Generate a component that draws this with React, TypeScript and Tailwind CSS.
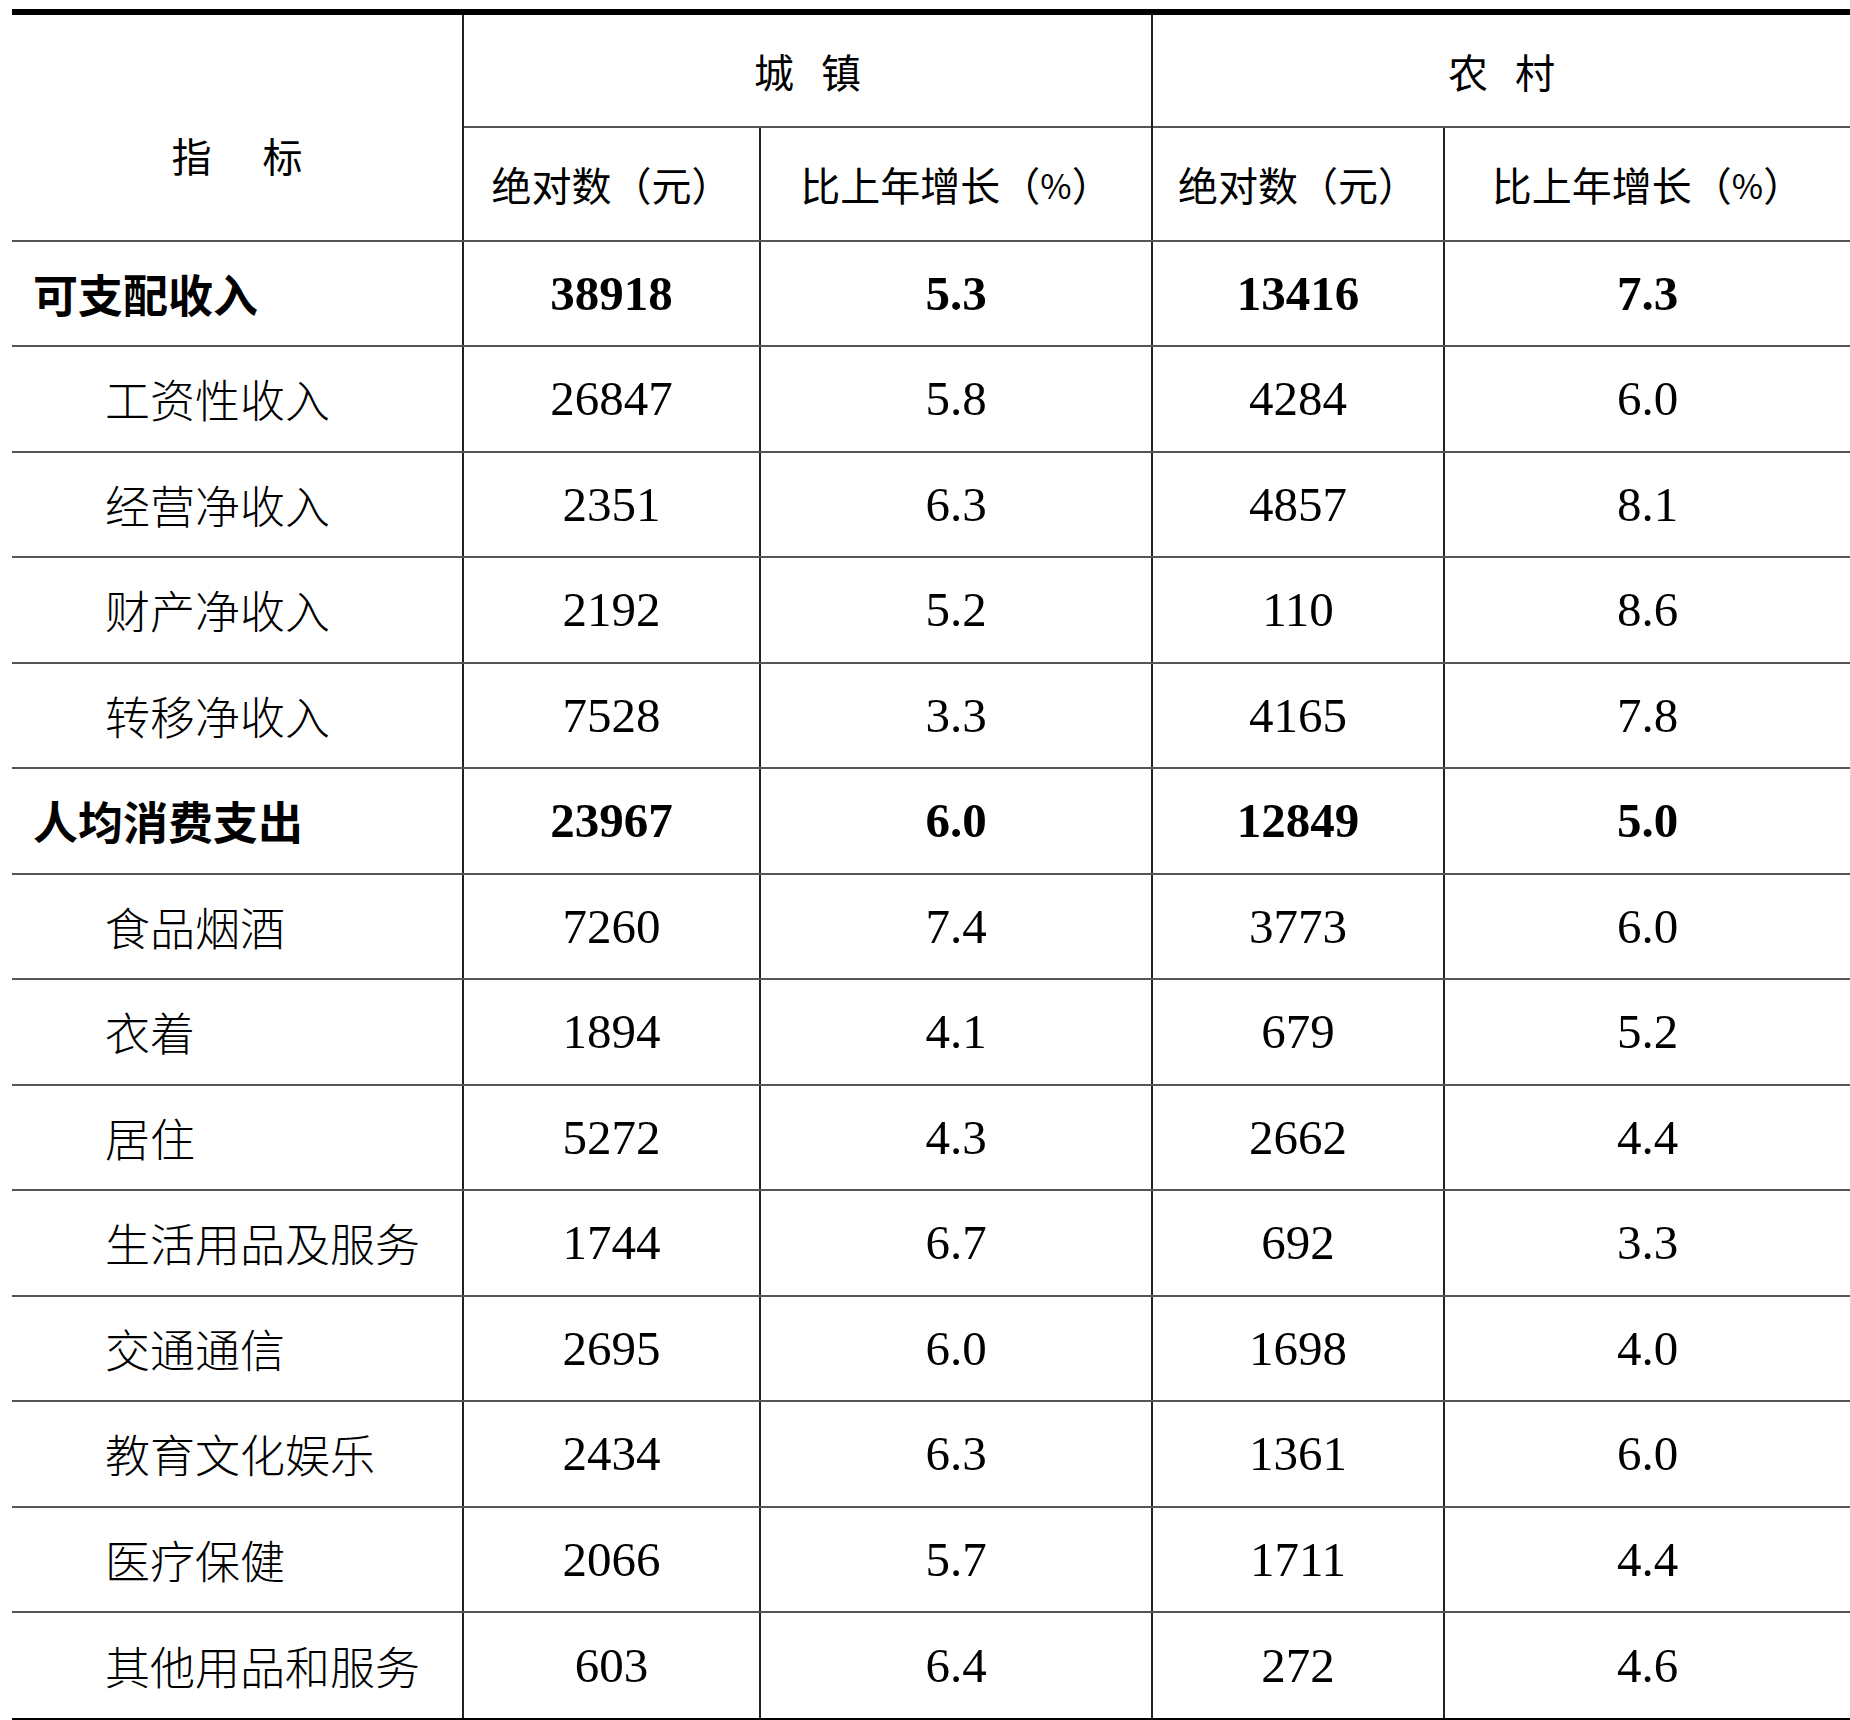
const rows: { label: string; a: string; b: string; c: string; d: string; bold?: boolean }[] = [
  { label: "可支配收入", a: "38918", b: "5.3", c: "13416", d: "7.3", bold: true },
  { label: "工资性收入", a: "26847", b: "5.8", c: "4284", d: "6.0" },
  { label: "经营净收入", a: "2351", b: "6.3", c: "4857", d: "8.1" },
  { label: "财产净收入", a: "2192", b: "5.2", c: "110", d: "8.6" },
  { label: "转移净收入", a: "7528", b: "3.3", c: "4165", d: "7.8" },
  { label: "人均消费支出", a: "23967", b: "6.0", c: "12849", d: "5.0", bold: true },
  { label: "食品烟酒", a: "7260", b: "7.4", c: "3773", d: "6.0" },
  { label: "衣着", a: "1894", b: "4.1", c: "679", d: "5.2" },
  { label: "居住", a: "5272", b: "4.3", c: "2662", d: "4.4" },
  { label: "生活用品及服务", a: "1744", b: "6.7", c: "692", d: "3.3" },
  { label: "交通通信", a: "2695", b: "6.0", c: "1698", d: "4.0" },
  { label: "教育文化娱乐", a: "2434", b: "6.3", c: "1361", d: "6.0" },
  { label: "医疗保健", a: "2066", b: "5.7", c: "1711", d: "4.4" },
  { label: "其他用品和服务", a: "603", b: "6.4", c: "272", d: "4.6" },
];

const head = "font-['Noto_Sans_CJK_SC',sans-serif] text-[40px] font-normal text-black";
const num = "flex items-center justify-center border-l-2 border-[#222] font-['Liberation_Serif','Noto_Sans_CJK_SC',serif] text-[49px] text-black";

export default function App() {
  return (
    <div className="min-h-[1720px] bg-white pl-[12px] pt-[9px]">
      <div className="border-t-[6px] border-b-[5px] border-black">
        {/* header */}
        <div className="flex border-b-2 border-[#555]">
          <div className={`flex h-[225px] w-[450px] items-start justify-center pt-[110px] ${head}`}>
            <span>指</span>
            <span className="ml-[51px]">标</span>
          </div>
          <div className="flex w-[689px] flex-col border-l-2 border-[#222]">
            <div className={`flex h-[113px] items-center justify-center border-b-2 border-[#555] ${head}`}>
              <span>城</span>
              <span className="ml-[27px]">镇</span>
            </div>
            <div className="flex h-[112px]">
              <div className={`flex w-[295px] items-center justify-center ${head}`}>绝对数（元）</div>
              <div className={`flex flex-1 items-center justify-center border-l-2 border-[#222] ${head}`}>
                比上年增长（<span className="text-[34px]">%</span>）
              </div>
            </div>
          </div>
          <div className="flex flex-1 flex-col border-l-2 border-[#222]">
            <div className={`flex h-[113px] items-center justify-center border-b-2 border-[#555] ${head}`}>
              <span>农</span>
              <span className="ml-[27px]">村</span>
            </div>
            <div className="flex h-[112px]">
              <div className={`flex w-[290px] items-center justify-center ${head}`}>绝对数（元）</div>
              <div className={`flex flex-1 items-center justify-center border-l-2 border-[#222] ${head}`}>
                比上年增长（<span className="text-[34px]">%</span>）
              </div>
            </div>
          </div>
        </div>

        {/* body */}
        {rows.map((r, i) => (
          <div
            key={r.label}
            className={`flex ${i % 2 === 1 && i < rows.length - 1 ? "h-[106px]" : "h-[105px]"} ${
              i < rows.length - 1 ? "border-b-2 border-[#555]" : ""
            }`}
          >
            <div
              className={`flex w-[450px] items-center font-['Noto_Sans_CJK_SC',sans-serif] text-[45px] text-black ${
                r.bold ? "pl-[21px] font-bold" : "pl-[93px] font-light"
              }`}
            >
              {r.label}
            </div>
            <div className={`w-[297px] ${num} ${r.bold ? "font-bold" : ""}`}>{r.a}</div>
            <div className={`w-[392px] ${num} ${r.bold ? "font-bold" : ""}`}>{r.b}</div>
            <div className={`w-[292px] ${num} ${r.bold ? "font-bold" : ""}`}>{r.c}</div>
            <div className={`flex-1 ${num} ${r.bold ? "font-bold" : ""}`}>{r.d}</div>
          </div>
        ))}
      </div>
    </div>
  );
}
